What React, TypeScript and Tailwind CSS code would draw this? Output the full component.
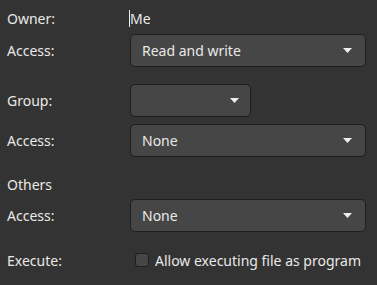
const Arrow = () => (
  <svg width="9" height="5" viewBox="0 0 9 5" className="shrink-0">
    <path d="M0 0 H9 L4.5 5 Z" fill="#eeeeec" />
  </svg>
)

function Combo({ value, wide = true }: { value?: string; wide?: boolean }) {
  return (
    <div
      className={`flex h-[33px] items-center justify-between rounded-[5px] border border-[#1e1e1e] bg-[#464646] pl-[11px] ${
        wide ? 'w-[236px] pr-[13px]' : 'w-[121px] pr-[11px]'
      }`}
    >
      <span>{value}</span>
      <Arrow />
    </div>
  )
}

function Row({ label, children, className = '' }: { label: string; children?: React.ReactNode; className?: string }) {
  return (
    <div className={`flex items-center ${className}`}>
      <span className="w-[123px] shrink-0">{label}</span>
      {children}
    </div>
  )
}

export default function App() {
  return (
    <div
      className="h-[285px] w-[377px] overflow-hidden bg-[#333333] pl-[7px] pt-[6px] text-[14px] text-[#e9e9e7]"
      style={{ fontFamily: '"Noto Sans", sans-serif' }}
    >
      <Row label="Owner:" className="h-[24px]">
        <span className="relative flex items-center">
          {/* text cursor */}
          <span className="absolute -left-[1px] top-[2px] h-[17px] w-px bg-[#eeeeec]" />
          Me
        </span>
      </Row>
      <Row label="Access:" className="mt-[4px]">
        <Combo value="Read and write" />
      </Row>

      <Row label="Group:" className="mt-[17px]">
        <Combo wide={false} />
      </Row>
      <Row label="Access:" className="mt-[7px]">
        <Combo value="None" />
      </Row>

      <div className="mt-[15px] flex h-[24px] items-center">Others</div>
      <Row label="Access:" className="mt-[3px]">
        <Combo value="None" />
      </Row>

      <Row label="Execute:" className="mt-[18px] h-[20px]">
        <label className="ml-[5px] flex items-center gap-[6px]">
          <span className="h-[14px] w-[14px] rounded-[3px] border border-[#1e1e1e] bg-[#464646]" />
          <span>Allow executing file as program</span>
        </label>
      </Row>
    </div>
  )
}
